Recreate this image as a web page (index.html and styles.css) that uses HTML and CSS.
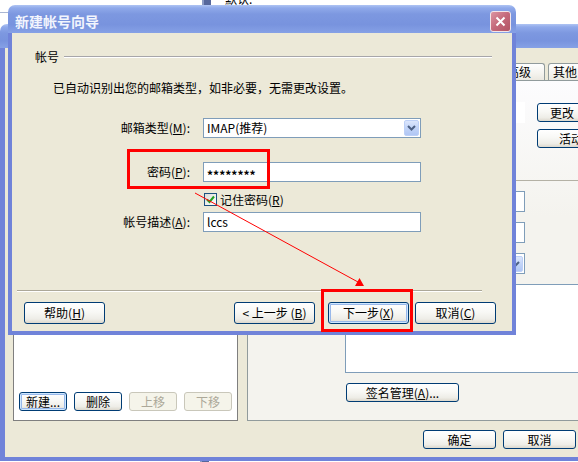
FILE: index.html
```html
<!DOCTYPE html>
<html lang="zh-CN">
<head>
  <meta charset="UTF-8">
  <title>新建帐号向导</title>
  <link rel="stylesheet" href="styles.css">
</head>
<body>
<div class="desk">
  <div class="bg-line"></div>
  <div class="bg-bar bg-bar-top"></div>
  <div class="bg-bar bg-bar-bottom"></div>
  <div class="bg-text">默认:</div>

  <!-- 后面的帐号属性窗口 -->
  <div class="win win-back">
    <div class="titlebar titlebar-back"></div>
    <div class="frame frame-back">
      <div class="back-main">
        <div class="listpanel">
          <div class="listbtns">
            <button class="btn btn-def">新建...</button>
            <button class="btn">删除</button>
            <button class="btn btn-off">上移</button>
            <button class="btn btn-off">下移</button>
          </div>
        </div>
        <div class="tabctl">
          <div class="tabs">
            <div class="tab tab-first">常规</div>
            <div class="tab">服务器</div>
            <div class="tab">签名</div>
            <div class="tab tab-adv">高级</div>
            <div class="tab tab-other">其他</div>
          </div>
          <div class="tabpanel">
            <div class="prow">
              <div class="pfield"></div>
              <button class="btn btn-change">更改</button>
            </div>
            <button class="btn btn-active">活动</button>
            <div class="pgroup"></div>
            <div class="edit pedit"></div>
            <div class="edit pedit"></div>
            <div class="edit pedit combo">
              <span class="dd"><svg width="9" height="6" viewBox="0 0 9 6"><polyline points="1,1 4.5,4.5 8,1" fill="none" stroke="#4D6185" stroke-width="2"/></svg></span>
            </div>
            <div class="edit sigbox"></div>
            <button class="btn btn-sig">签名管理(<u>A</u>)...</button>
          </div>
        </div>
      </div>
      <div class="back-foot">
        <button class="btn btn-ok">确定</button>
        <button class="btn btn-ok">取消</button>
      </div>
    </div>
  </div>

  <!-- 新建帐号向导 -->
  <div class="win win-front">
    <div class="titlebar titlebar-front">
      <span class="title-text">新建帐号向导</span>
      <span class="close"><svg width="11" height="11" viewBox="0 0 11 11"><path d="M1.5 1.5L9.5 9.5M9.5 1.5L1.5 9.5" stroke="#fff" stroke-width="2"/></svg></span>
    </div>
    <div class="frame frame-front">
      <div class="fhead">帐号</div>
      <p class="fdesc">已自动识别出您的邮箱类型，如非必要，无需更改设置。</p>
      <div class="fform">
        <div class="frow">
          <label class="flabel">邮箱类型(<u>M</u>):</label>
          <div class="edit fedit combo">
            <span class="etext">IMAP(推荐)</span>
            <span class="dd"><svg width="9" height="6" viewBox="0 0 9 6"><polyline points="1,1 4.5,4.5 8,1" fill="none" stroke="#4D6185" stroke-width="2"/></svg></span>
          </div>
        </div>
        <div class="frow frow-pw">
          <label class="flabel">密码(<u>P</u>):</label>
          <div class="edit fedit"><span class="etext pw">********</span></div>
        </div>
        <div class="fcheck">
          <span class="cbox"><svg width="11" height="11" viewBox="0 0 11 11"><polyline points="2,5.5 4.5,8 9,2.5" fill="none" stroke="#21A121" stroke-width="2"/></svg></span>
          <span>记住密码(<u>R</u>)</span>
        </div>
        <div class="frow frow-desc">
          <label class="flabel">帐号描述(<u>A</u>):</label>
          <div class="edit fedit"><span class="etext">lccs</span></div>
        </div>
      </div>
      <div class="ffoot">
        <div class="fsep"></div>
        <div class="fbtns">
          <button class="btn btn-wiz">帮助(<u>H</u>)</button>
          <span class="spacer"></span>
          <button class="btn btn-wiz">&lt; 上一步 (<u>B</u>)</button>
          <button class="btn btn-wiz btn-def btn-next">下一步(<u>X</u>)</button>
          <button class="btn btn-wiz btn-cancel">取消(<u>C</u>)</button>
        </div>
      </div>
    </div>
  </div>

  <!-- 红色标注 -->
  <div class="mark mark-pw"></div>
  <div class="mark mark-next"></div>
  <svg class="annot" width="578" height="462" viewBox="0 0 578 462">
    <line x1="195" y1="193" x2="358" y2="282" stroke="#FF0000" stroke-width="1"/>
    <polygon points="364,286 355,286 359.5,278" fill="#FF0000"/>
  </svg>
</div>
</body>
</html>
```

FILE: styles.css
```css
* {
  box-sizing: border-box;
}
body {
  margin: 0;
  background: #fff;
}
.desk {
  position: relative;
  width: 578px;
  height: 462px;
  overflow: hidden;
  font: 12px/14px "Noto Sans CJK SC", sans-serif;
  color: #000;
}
p {
  margin: 0;
}

/* 背景里露出的一点点 */
.bg-line {
  position: absolute;
  left: 0;
  top: 12px;
  width: 8px;
  height: 1px;
  background: #A9B6D3;
}
.bg-bar {
  position: absolute;
  left: 202px;
  width: 9px;
  background: #56679C;
  border-left: 2px solid #8C9BC4;
}
.bg-bar-top {
  top: 0;
  height: 5px;
}
.bg-bar-bottom {
  left: 200px;
  top: 460px;
  height: 2px;
}
.bg-text {
  position: absolute;
  left: 225px;
  top: -8px;
}

/* 窗口 */
.win {
  position: absolute;
  display: flex;
  flex-direction: column;
}
.win-back {
  left: 0;
  top: 24px;
  width: 600px;
  height: 437px;
}
.win-front {
  left: 8px;
  top: 5px;
  width: 508px;
  height: 330px;
}
.titlebar {
  flex: none;
  display: flex;
  align-items: center;
  border-radius: 7px 7px 0 0;
  background: linear-gradient(#AFC4F3, #8FA9EA 3px, #7D98E0 9px, #7893DE 70%, #86A1E6);
  color: #F2F5FD;
  font-weight: bold;
  font-size: 14px;
}
.titlebar-back {
  height: 24px;
}
.titlebar-front {
  height: 28px;
  padding: 4px 5px 0 7px;
}
.close {
  margin-left: auto;
  width: 21px;
  height: 21px;
  border: 1px solid #F3E6E9;
  border-radius: 3px;
  background: linear-gradient(135deg, #DC95A2, #C4687A 50%, #B25565);
  display: flex;
  align-items: center;
  justify-content: center;
}
.frame {
  flex: 1;
  background: #ECE9D8;
  border: solid #7083D9;
  border-width: 0 4px 4px;
  display: flex;
  flex-direction: column;
}
.frame-back {
  border-width: 0 5px 4px;
  padding: 15px 8px 8px 8px;
}

/* 通用控件 */
.btn {
  font: inherit;
  color: #000;
  height: 19px;
  padding: 0;
  border: 1px solid #003C74;
  border-radius: 3px;
  background: linear-gradient(#FFFFFF, #F8F8F5 45%, #EEEDE7 80%, #DCD8CD);
  display: flex;
  align-items: center;
  justify-content: center;
  white-space: nowrap;
}
.btn-def {
  box-shadow: inset 0 0 0 1px #CEE7FF, inset 0 0 0 2px #98B8EA;
}
.btn-off {
  border-color: #C9C7BA;
  background: #F5F4EA;
  color: #ACA899;
}
.edit {
  background: #fff;
  border: 1px solid #7F9DB9;
  display: flex;
  align-items: center;
}
.etext {
  padding-left: 3px;
}
.dd {
  width: 15px;
  height: 16px;
  margin: 0 1px 0 auto;
  border: 1px solid #BDD0F7;
  border-radius: 2px;
  background: linear-gradient(#DCE6FC, #C2D4F8 50%, #B0C6F4);
  display: flex;
  align-items: center;
  justify-content: center;
}

/* 后面窗口内容 */
.back-main {
  flex: none;
  display: flex;
  gap: 9px;
  height: 358px;
}
.listpanel {
  flex: none;
  width: 225px;
  background: #fff;
  border: 1px solid #7F7F7F;
  display: flex;
  align-items: flex-end;
  padding: 0 0 9px 5px;
}
.listbtns {
  display: flex;
  gap: 7px;
}
.listbtns .btn {
  width: 48px;
}
.tabctl {
  flex: 1;
  display: flex;
  flex-direction: column;
}
.tabs {
  flex: none;
  display: flex;
  height: 17px;
  padding-left: 2px;
}
.tab {
  flex: none;
  width: 79px;
  height: 17px;
  margin-right: 2px;
  border: 1px solid #919B9C;
  border-bottom: 0;
  border-radius: 3px 3px 0 0;
  background: linear-gradient(#FEFEFE, #F4F3EE 60%, #EAE8E0);
  text-align: center;
  line-height: 16px;
}
.tab-first {
  width: 80px;
}
.tab-adv {
  width: 52px;
  margin-right: 3px;
}
.tab-other {
  width: 60px;
  text-align: left;
  padding-left: 4px;
}
.tabpanel {
  flex: 1;
  border: 1px solid #919B9C;
  background: linear-gradient(#FCFCFE, #F4F3EE 40%);
  padding: 21px 0 0 97px;
  display: flex;
  flex-direction: column;
  align-items: flex-start;
}
.prow {
  display: flex;
  gap: 12px;
  align-items: flex-start;
}
.pfield {
  width: 180px;
  height: 21px;
  background: #fff;
}
.btn-change {
  width: 50px;
  margin-top: 1px;
}
.btn-active {
  width: 68px;
  margin: 6px 0 0 192px;
}
.pgroup {
  width: 400px;
  margin: 32px 0 0 -90px;
  border-top: 1px solid #B4B1A5;
}
.pedit {
  width: 180px;
  height: 21px;
  margin-top: 10px;
}
.sigbox {
  width: 260px;
  height: 89px;
  margin-top: 10px;
}
.btn-sig {
  width: 113px;
  margin: 10px 0 0 1px;
}
.back-foot {
  flex: none;
  display: flex;
  justify-content: flex-end;
  gap: 7px;
  margin-top: 9px;
  padding-right: 11px;
}
.btn-ok {
  width: 73px;
}

/* 向导内容 */
.fhead {
  display: flex;
  align-items: center;
  margin: 17px 20px 0 23px;
}
.fhead::after {
  content: "";
  flex: 1;
  margin-left: 5px;
  border-top: 1px solid #A7A6AA;
  border-bottom: 1px solid #fff;
}
.fdesc {
  margin: 17px 0 0 41px;
}
.fform {
  margin-top: 23px;
}
.frow {
  display: flex;
  align-items: center;
  height: 20px;
}
.flabel {
  width: 178px;
  margin-right: 13px;
  text-align: right;
}
.fedit {
  width: 218px;
  height: 20px;
}
.frow-pw {
  margin-top: 24px;
}
.pw {
  font-weight: bold;
  margin-top: 5px;
}
.fcheck {
  display: flex;
  align-items: center;
  gap: 3px;
  height: 13px;
  margin: 11px 0 0 192px;
}
.cbox {
  width: 13px;
  height: 13px;
  border: 1px solid #1C5180;
  background: linear-gradient(135deg, #DCDCD7, #FFFFFF);
  display: flex;
  align-items: center;
  justify-content: center;
}
.frow-desc {
  margin-top: 6px;
}
.ffoot {
  margin-top: auto;
  padding-bottom: 7px;
}
.fsep {
  margin: 0 30px 0 5px;
  border-top: 1px solid #ACA899;
  border-bottom: 1px solid #fff;
}
.fbtns {
  display: flex;
  margin-top: 10px;
  padding: 0 16px 0 12px;
}
.fbtns .spacer {
  flex: 1;
}
.btn-wiz {
  width: 81px;
  height: 22px;
}
.btn-next {
  margin-left: 13px;
}
.btn-cancel {
  margin-left: 6px;
}

/* 红色标注 */
.mark {
  position: absolute;
  border: 3px solid #FF0000;
}
.mark-pw {
  left: 127px;
  top: 149px;
  width: 143px;
  height: 40px;
}
.mark-next {
  left: 321px;
  top: 289px;
  width: 92px;
  height: 43px;
}
.annot {
  position: absolute;
  left: 0;
  top: 0;
}
```
